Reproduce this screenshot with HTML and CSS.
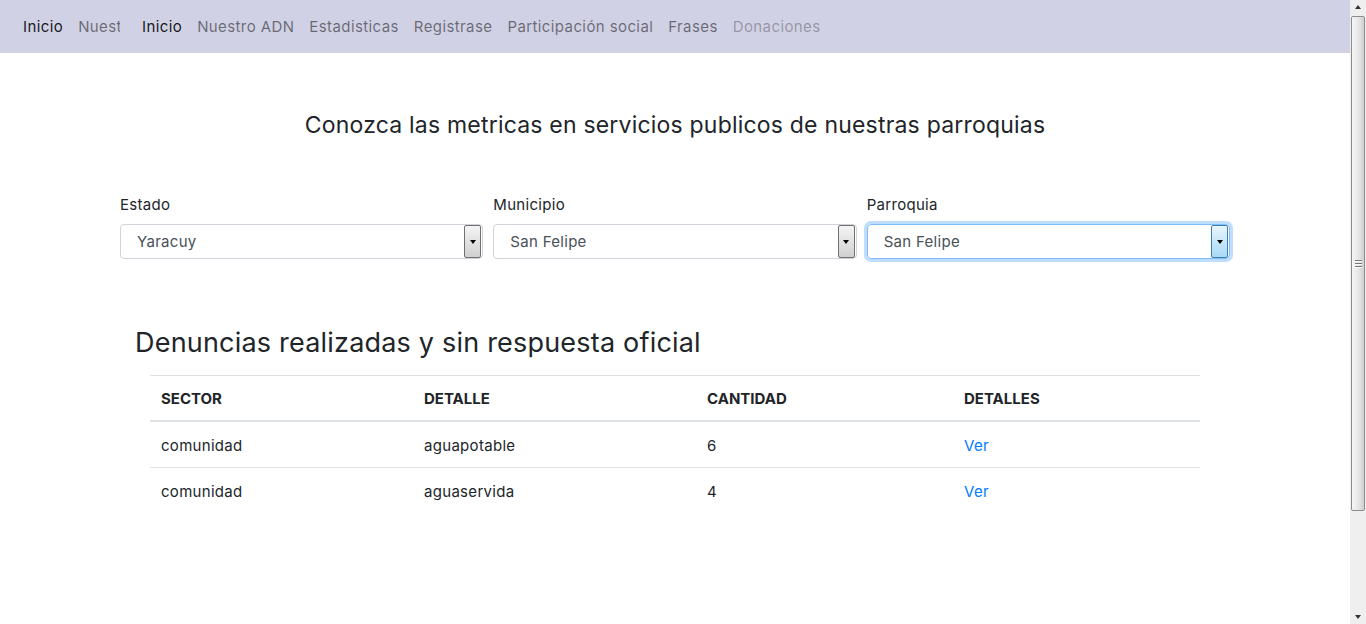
FILE: index.html
```html
<!DOCTYPE html>
<html lang="es">
<head>
<meta charset="utf-8">
<title>Metricas</title>
<link rel="stylesheet" href="styles.css">
</head>
<body>
<div class="page">
  <nav class="navbar">
    <div class="brand-clip">
      <a class="nav-link active">Inicio</a>
      <a class="nav-link">Nuestro ADN</a>
    </div>
    <a class="nav-link active">Inicio</a>
    <a class="nav-link">Nuestro ADN</a>
    <a class="nav-link">Estadisticas</a>
    <a class="nav-link">Registrase</a>
    <a class="nav-link">Participación social</a>
    <a class="nav-link">Frases</a>
    <a class="nav-link disabled">Donaciones</a>
  </nav>
  <main class="container">
    <h2 class="lead-title">Conozca las metricas en servicios publicos de nuestras parroquias</h2>
    <div class="filters">
      <div class="field">
        <label class="field-label">Estado</label>
        <div class="select"><span class="select-text">Yaracuy</span><span class="select-btn"><span class="arrow"></span></span></div>
      </div>
      <div class="field">
        <label class="field-label">Municipio</label>
        <div class="select"><span class="select-text">San Felipe</span><span class="select-btn"><span class="arrow"></span></span></div>
      </div>
      <div class="field">
        <label class="field-label">Parroquia</label>
        <div class="select focused"><span class="select-text">San Felipe</span><span class="select-btn"><span class="arrow"></span></span></div>
      </div>
    </div>
    <section class="report">
      <h3 class="report-title">Denuncias realizadas y sin respuesta oficial</h3>
      <table class="table">
        <thead>
          <tr><th class="c1">SECTOR</th><th class="c2">DETALLE</th><th class="c3">CANTIDAD</th><th class="c4">DETALLES</th></tr>
        </thead>
        <tbody>
          <tr><td>comunidad</td><td>aguapotable</td><td>6</td><td><a class="link">Ver</a></td></tr>
          <tr><td>comunidad</td><td>aguaservida</td><td>4</td><td><a class="link">Ver</a></td></tr>
        </tbody>
      </table>
    </section>
  </main>
</div>
<div class="scrollbar">
  <div class="sb-btn"><span class="sb-up"></span></div>
  <div class="sb-track">
    <div class="sb-thumb"><span class="grip"></span><span class="grip"></span><span class="grip"></span></div>
  </div>
  <div class="sb-btn"><span class="sb-down"></span></div>
</div>
</body>
</html>
```
FILE: styles.css
```css
html, body {
  margin: 0;
  padding: 0;
}
body {
  font-family: Inter, "Open Sans", sans-serif;
  color: #212529;
  background: #fff;
  font-size: 15px;
  display: flex;
  height: 624px;
  overflow: hidden;
}
.page {
  flex: 1;
  min-width: 0;
}
.navbar {
  height: 53px;
  background: #d1d1e5;
  display: flex;
  align-items: center;
  padding: 0 0 0 23px;
  gap: 15px;
  box-sizing: border-box;
}
.brand-clip {
  display: flex;
  gap: 15px;
  width: 97px;
  overflow: hidden;
  white-space: nowrap;
  flex: none;
  margin-right: 7px;
}
.nav-link {
  color: rgba(0, 0, 0, .5);
  font-size: 15px;
  white-space: nowrap;
  letter-spacing: 0.4px;
}
.nav-link.active {
  color: rgba(0, 0, 0, .9);
}
.nav-link.disabled {
  color: rgba(0, 0, 0, .3);
}
.container {
  width: 1110px;
  margin: 0 auto;
}
.lead-title {
  margin: 58px 0 0;
  font-size: 23px;
  font-weight: 400;
  text-align: center;
  line-height: 28px;
  letter-spacing: 0.2px;
}
.filters {
  display: grid;
  grid-template-columns: repeat(3, 1fr);
  gap: 10px;
  margin-top: 55px;
}
.field-label {
  display: block;
  font-size: 15px;
  line-height: 22px;
  margin-bottom: 8px;
  letter-spacing: 0.3px;
}
.select {
  height: 35px;
  border: 1px solid #ced4da;
  border-radius: 4px;
  display: flex;
  align-items: center;
  box-sizing: border-box;
  padding: 0 1px 0 16px;
}
.select-text {
  flex: 1;
  font-size: 15px;
  color: #495057;
  letter-spacing: 0.3px;
}
.select-btn {
  width: 15px;
  height: 31px;
  border: 1px solid #707070;
  border-radius: 2px;
  background: linear-gradient(#f4f4f4, #d0d0d0);
  display: flex;
  align-items: center;
  justify-content: center;
}
.arrow {
  width: 0;
  height: 0;
  border-left: 3.5px solid transparent;
  border-right: 3.5px solid transparent;
  border-top: 4px solid #000;
}
.select.focused {
  border-color: #80bdff;
  box-shadow: 0 0 0 3px rgba(0, 123, 255, .25);
}
.select.focused .select-btn {
  border-color: #3c7fb1;
  background: linear-gradient(#e8f4fc, #a9d9f5);
}
.report {
  padding: 0 30px 0 15px;
  margin-top: 67px;
}
.report-title {
  margin: 0 0 15px;
  font-size: 27px;
  font-weight: 400;
  line-height: 34px;
  letter-spacing: 0.2px;
}
.table {
  width: 1050px;
  margin-left: 15px;
  border-collapse: collapse;
}
.table th, .table td {
  text-align: left;
  padding: 12px 11px 10px;
  line-height: 23px;
  border-top: 1px solid #dee2e6;
  font-size: 15px;
  letter-spacing: 0.3px;
}
.table th {
  font-weight: 700;
  letter-spacing: 0;
  line-height: 22px;
}
.table thead th {
  border-bottom: 2px solid #dee2e6;
}
.c1 { width: 241px; }
.c2 { width: 261px; }
.c3 { width: 235px; }
.link {
  color: #007bff;
}
.scrollbar {
  width: 16px;
  flex: none;
  height: 624px;
  background: #efefef;
  display: flex;
  flex-direction: column;
}
.sb-btn {
  height: 14px;
  display: flex;
  align-items: center;
  justify-content: center;
}
.sb-up {
  width: 0;
  height: 0;
  border-left: 3.5px solid transparent;
  border-right: 3.5px solid transparent;
  border-bottom: 4px solid #333;
}
.sb-down {
  width: 0;
  height: 0;
  border-left: 3.5px solid transparent;
  border-right: 3.5px solid transparent;
  border-top: 4px solid #333;
}
.sb-track {
  flex: 1;
  padding: 2px 1px 0;
}
.sb-thumb {
  height: 495px;
  box-sizing: border-box;
  border: 1px solid #8c8c8c;
  border-radius: 2px;
  background: linear-gradient(to right, #f6f6f6, #e8e8e8 50%, #cfcfcf);
  display: flex;
  flex-direction: column;
  align-items: center;
  justify-content: center;
  gap: 1px;
}
.grip {
  width: 7px;
  height: 1px;
  background: #777;
  border-bottom: 1px solid #fafafa;
}
```
